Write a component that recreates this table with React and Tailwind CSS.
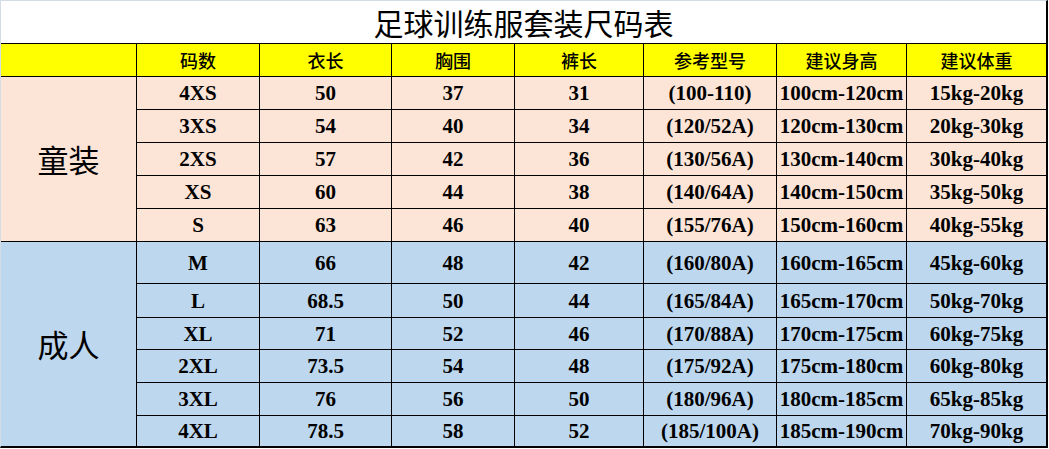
import React from "react";

const child = [
  ["4XS", "50", "37", "31", "(100-110)", "100cm-120cm", "15kg-20kg"],
  ["3XS", "54", "40", "34", "(120/52A)", "120cm-130cm", "20kg-30kg"],
  ["2XS", "57", "42", "36", "(130/56A)", "130cm-140cm", "30kg-40kg"],
  ["XS", "60", "44", "38", "(140/64A)", "140cm-150cm", "35kg-50kg"],
  ["S", "63", "46", "40", "(155/76A)", "150cm-160cm", "40kg-55kg"],
];
const adult = [
  ["M", "66", "48", "42", "(160/80A)", "160cm-165cm", "45kg-60kg"],
  ["L", "68.5", "50", "44", "(165/84A)", "165cm-170cm", "50kg-70kg"],
  ["XL", "71", "52", "46", "(170/88A)", "170cm-175cm", "60kg-75kg"],
  ["2XL", "73.5", "54", "48", "(175/92A)", "175cm-180cm", "60kg-80kg"],
  ["3XL", "76", "56", "50", "(180/96A)", "180cm-185cm", "65kg-85kg"],
  ["4XL", "78.5", "58", "52", "(185/100A)", "185cm-190cm", "70kg-90kg"],
];
const headers = ["码数", "衣长", "胸围", "裤长", "参考型号", "建议身高", "建议体重"];

const cjk = { fontFamily: '"Noto Sans CJK SC", "Noto Sans", sans-serif' };
const serif = { fontFamily: '"Liberation Serif", "Noto Sans CJK SC", serif' };

function Cell({ children, last, bottom, bg, font, cls = "" }) {
  return (
    <div
      className={`flex items-center justify-center border-black ${last ? "" : "border-r"} ${bottom ? "" : "border-b"} ${bg} ${cls}`}
      style={font}
    >
      {children}
    </div>
  );
}

export default function App() {
  return (
    <div className="w-[1049px] h-[449px] bg-white">
      <div className="w-[1048px] border-t border-l border-t-[#d4dce6] border-l-[#d4dce6] border-r-2 border-b-2 border-r-black border-b-black">
        <div
          className="h-[43px] border-b border-black flex items-center justify-center text-[30px] text-black leading-none"
          style={cjk}
        >
          足球训练服套装尺码表
        </div>
        <div className="grid grid-cols-[136px_123px_132px_123px_129px_133px_130px_139px] grid-rows-[33px_33px_33px_33px_33px_33px_42px_34px_32px_33px_33px_30px]">
          <Cell bg="bg-[#ffff00]" />
          {headers.map((h, i) => (
            <Cell key={h} bg="bg-[#ffff00]" last={i === 6} font={cjk} cls="text-[18px] font-medium text-black">
              {h}
            </Cell>
          ))}
          {child.map((r, ri) => (
            <React.Fragment key={r[0]}>
              {ri === 0 && (
                <Cell bg="bg-[#fce4d6]" font={cjk} cls="row-span-5 text-[31px] text-black">
                  童装
                </Cell>
              )}
              {r.map((v, i) => (
                <Cell key={i} bg="bg-[#fce4d6]" last={i === 6} font={serif} cls="pt-[2px] text-[21px] font-bold text-black">
                  {v}
                </Cell>
              ))}
            </React.Fragment>
          ))}
          {adult.map((r, ri) => (
            <React.Fragment key={r[0]}>
              {ri === 0 && (
                <Cell bg="bg-[#bdd7ee]" bottom font={cjk} cls="row-span-6 text-[31px] text-black">
                  成人
                </Cell>
              )}
              {r.map((v, i) => (
                <Cell
                  key={i}
                  bg="bg-[#bdd7ee]"
                  last={i === 6}
                  bottom={ri === adult.length - 1}
                  font={serif}
                  cls="pt-[2px] text-[21px] font-bold text-black"
                >
                  {v}
                </Cell>
              ))}
            </React.Fragment>
          ))}
        </div>
      </div>
    </div>
  );
}
